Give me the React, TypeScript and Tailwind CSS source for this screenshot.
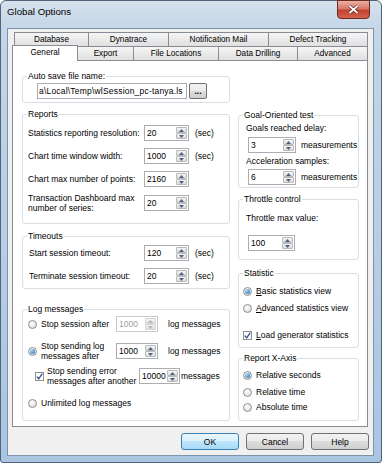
import React from "react";

type SpinProps = { value: string; className: string; disabled?: boolean };

function Arrow({ up, disabled }: { up?: boolean; disabled?: boolean }) {
  return (
    <div
      className={
        "flex-1 flex items-center justify-center border rounded-[1px] bg-[linear-gradient(#f6f6f6,#dcdcdc)] " +
        (disabled ? "border-[#d6d6d6]" : "border-[#b9b9b9]")
      }
    >
      <svg width="5" height="3" viewBox="0 0 5 3">
        <path d={up ? "M0 3 L2.5 0 L5 3 Z" : "M0 0 L2.5 3 L5 0 Z"} fill={disabled ? "#b8b8b8" : "#4d6185"} />
      </svg>
    </div>
  );
}

function Spin({ value, className, disabled }: SpinProps) {
  return (
    <div className={"flex h-[16px] border bg-white shrink-0 " + (disabled ? "border-[#c9c9c9] " : "border-[#abadb3] ") + className}>
      <span className={"flex-1 pl-[2px] flex items-center " + (disabled ? "text-[#a0a0a0]" : "")}>{value}</span>
      <div className="w-[11px] flex flex-col my-[1px] mr-[1px]">
        <Arrow up disabled={disabled} />
        <Arrow disabled={disabled} />
      </div>
    </div>
  );
}

function Radio({ checked }: { checked?: boolean }) {
  return (
    <span className="w-[9px] h-[9px] rounded-full border border-[#8e8f8f] bg-[radial-gradient(circle_at_40%_35%,#ffffff,#d4d4d4)] flex items-center justify-center shrink-0">
      {checked && <span className="w-[5px] h-[5px] rounded-full bg-[radial-gradient(circle_at_35%_30%,#a6dcfc,#1a66ad)]" />}
    </span>
  );
}

function Check({ checked }: { checked?: boolean }) {
  return (
    <span className="w-[9px] h-[9px] border border-[#8e8f8f] bg-white flex items-center justify-center shrink-0">
      {checked && (
        <svg width="7" height="7" viewBox="0 0 7 7">
          <path d="M0.8 3.6 L2.7 5.8 L6.3 0.6" stroke="#3f5597" strokeWidth="1.4" fill="none" />
        </svg>
      )}
    </span>
  );
}

function Group({ title, className, children }: { title: string; className: string; children?: React.ReactNode }) {
  return (
    <fieldset className={"border border-[#d5dfe5] rounded-[3px] " + className}>
      <legend className="ml-[4px] px-[1px] leading-[10px]">{title}</legend>
      {children}
    </fieldset>
  );
}

function Btn({ label, primary }: { label: string; primary?: boolean }) {
  return (
    <button
      className={
        "w-[58px] h-[17px] rounded-[3px] border leading-[10px] " +
        (primary
          ? "border-[#3c7fb1] bg-[linear-gradient(#eaf6fd,#d9f0fc_50%,#bee6fd_50%,#a7d9f5)]"
          : "border-[#707070] bg-[linear-gradient(#f2f2f2,#ebebeb_50%,#dddddd_50%,#cfcfcf)]")
      }
    >
      {label}
    </button>
  );
}

const backTabs = [
  { label: "Database", w: "w-[74px]" },
  { label: "Dynatrace", w: "w-[80px]" },
  { label: "Notification Mail", w: "w-[100px]" },
  { label: "Defect Tracking", w: "w-[100px] border-r" },
];

const frontTabs = [
  { label: "Export", w: "w-[56px]" },
  { label: "File Locations", w: "w-[85px]" },
  { label: "Data Drilling", w: "w-[79px]" },
  { label: "Advanced", w: "w-[70px]" },
];

export default function App() {
  return (
    <div className="w-[382px] h-[463px] overflow-hidden font-['Liberation_Sans',Arial,sans-serif] text-[8.5px] leading-[10px] text-black">
      <div className="w-[382px] h-[463px] border border-[#4f637a] rounded-t-[6px] rounded-b-[3px] bg-[linear-gradient(180deg,#d6e1ec_0px,#c4d6e8_28px,#a9c5e2_100%)] flex flex-col">
        {/* title bar */}
        <div className="h-[27px] flex items-start justify-between">
          <span className="ml-[6px] mt-[5px] text-[9.7px] leading-[12px]">Global Options</span>
          <div className="-mt-px mr-[11px] w-[33px] h-[19px] rounded-b-[4px] border border-[#6b2a22] bg-[linear-gradient(#eab0a3,#d77a6a_45%,#c2412f_55%,#d4634d)] flex items-center justify-center">
            <svg width="11" height="9" viewBox="0 0 11 9">
              <path d="M1.5 1 L9.5 8 M9.5 1 L1.5 8" stroke="#5a2620" strokeWidth="3.2" />
              <path d="M1.5 1 L9.5 8 M9.5 1 L1.5 8" stroke="#ffffff" strokeWidth="1.7" />
            </svg>
          </div>
        </div>

        {/* client area */}
        <div className="ml-[6px] w-[367px] h-[428px] border border-[#7f93aa] bg-[#f0f0f0] flex flex-col">
          <div className="mt-[3px] pl-[6px] h-[14px] flex">
            {backTabs.map((t) => (
              <div
                key={t.label}
                className={"h-[14px] border-l border-t border-[#898c95] bg-[linear-gradient(#f5f5f5,#e0e0e0)] flex items-center justify-center text-[8.2px] " + t.w}
              >
                {t.label}
              </div>
            ))}
          </div>
          <div className="pl-[4px] h-[14px] flex items-end">
            <div className="relative z-10 -mb-px w-[66px] h-[16px] border-l border-t border-r border-[#898c95] bg-white flex items-start justify-center pt-[2px] text-[8.2px]">
              General
            </div>
            {frontTabs.map((t) => (
              <div
                key={t.label}
                className={"h-[14px] border-t border-r border-[#898c95] bg-[linear-gradient(#f5f5f5,#e0e0e0)] flex items-center justify-center text-[8.2px] " + t.w}
              >
                {t.label}
              </div>
            ))}
          </div>

          {/* tab page */}
          <div className="ml-[4px] w-[356px] h-[367px] border border-[#898c95] bg-white flex">
            <div className="ml-[9px] w-[208px] pt-[10px] flex flex-col">
              <Group title="Auto save file name:" className="h-[32px]">
                <div className="mt-[2px] ml-[14px] flex">
                  <div className="w-[150px] h-[16px] border border-[#abadb3] bg-white pl-[1px] flex items-center overflow-hidden whitespace-nowrap tracking-[0.2px]">
                    a\Local\Temp\wlSession_pc-tanya.ls
                  </div>
                  <button className="ml-[2px] w-[18px] h-[16px] rounded-[2px] border border-[#707070] bg-[linear-gradient(#f2f2f2,#ebebeb_50%,#dddddd_50%,#cfcfcf)] font-bold leading-[8px]">
                    ...
                  </button>
                </div>
              </Group>

              <Group title="Reports" className="mt-[6px] h-[115px]">
                <div className="mt-[6px] h-[16px] pl-[5px] flex items-center">
                  <span className="w-[116px]">Statistics reporting resolution:</span>
                  <Spin value="20" className="w-[45px]" />
                  <span className="ml-[6px]">(sec)</span>
                </div>
                <div className="mt-[7px] h-[16px] pl-[5px] flex items-center">
                  <span className="w-[116px]">Chart time window width:</span>
                  <Spin value="1000" className="w-[45px]" />
                  <span className="ml-[6px]">(sec)</span>
                </div>
                <div className="mt-[7px] h-[16px] pl-[5px] flex items-center">
                  <span className="w-[116px]">Chart max number of points:</span>
                  <Spin value="2160" className="w-[45px]" />
                </div>
                <div className="mt-[6px] h-[20px] pl-[5px] flex items-center">
                  <span className="w-[116px]">
                    Transaction Dashboard max
                    <br />
                    number of series:
                  </span>
                  <Spin value="20" className="w-[45px]" />
                </div>
              </Group>

              <Group title="Timeouts" className="mt-[7px] h-[58px]">
                <div className="mt-[4px] h-[16px] pl-[6px] flex items-center">
                  <span className="w-[115px]">Start session timeout:</span>
                  <Spin value="120" className="w-[45px]" />
                  <span className="ml-[6px]">(sec)</span>
                </div>
                <div className="mt-[7px] h-[16px] pl-[6px] flex items-center">
                  <span className="w-[115px]">Terminate session timeout:</span>
                  <Spin value="20" className="w-[45px]" />
                  <span className="ml-[6px]">(sec)</span>
                </div>
              </Group>

              <Group title="Log messages" className="mt-[15px] h-[117px]">
                <div className="mt-[2px] h-[16px] pl-[5px] flex items-center">
                  <Radio />
                  <span className="ml-[4px] w-[75px]">Stop session after</span>
                  <Spin value="1000" className="w-[42px]" disabled />
                  <span className="ml-[10px]">log messages</span>
                </div>
                <div className="mt-[9px] h-[20px] pl-[5px] flex items-center">
                  <Radio checked />
                  <span className="ml-[4px] w-[75px]">
                    Stop sending log
                    <br />
                    messages after
                  </span>
                  <Spin value="1000" className="w-[42px]" />
                  <span className="ml-[10px]">log messages</span>
                </div>
                <div className="mt-[5px] h-[20px] pl-[12px] flex items-center">
                  <Check checked />
                  <span className="ml-[3px] w-[92px]">
                    Stop sending error
                    <br />
                    messages after another
                  </span>
                  <Spin value="10000" className="w-[41px]" />
                  <span className="ml-[1px]">messages</span>
                </div>
                <div className="mt-[11px] h-[12px] pl-[5px] flex items-center">
                  <Radio />
                  <span className="ml-[4px]">Unlimited log messages</span>
                </div>
              </Group>
            </div>

            <div className="ml-[8px] w-[121px] pt-[49px] flex flex-col">
              <Group title="Goal-Oriented test" className="h-[78px]">
                <div className="mt-[3px] pl-[7px]">Goals reached delay:</div>
                <div className="mt-[4px] pl-[9px] flex items-center whitespace-nowrap">
                  <Spin value="3" className="w-[48px]" />
                  <span className="ml-[5px]">measurements</span>
                </div>
                <div className="mt-[3px] pl-[7px]">Acceleration samples:</div>
                <div className="mt-[3px] pl-[9px] flex items-center whitespace-nowrap">
                  <Spin value="6" className="w-[48px]" />
                  <span className="ml-[5px]">measurements</span>
                </div>
              </Group>

              <Group title="Throttle control" className="mt-[6px] h-[66px]">
                <div className="mt-[9px] pl-[7px]">Throttle max value:</div>
                <div className="mt-[12px] pl-[9px] flex">
                  <Spin value="100" className="w-[47px]" />
                </div>
              </Group>

              <Group title="Statistic" className="mt-[8px] h-[80px]">
                <div className="mt-[7px] h-[12px] pl-[4px] flex items-center">
                  <Radio checked />
                  <span className="ml-[4px]">
                    <u>B</u>asic statistics view
                  </span>
                </div>
                <div className="mt-[5px] h-[12px] pl-[4px] flex items-center">
                  <Radio />
                  <span className="ml-[4px]">
                    <u>A</u>dvanced statistics view
                  </span>
                </div>
                <div className="mt-[15px] h-[12px] pl-[4px] flex items-center">
                  <Check checked />
                  <span className="ml-[4px]">
                    <u>L</u>oad generator statistics
                  </span>
                </div>
              </Group>

              <Group title="Report X-Axis" className="mt-[5px] h-[68px]">
                <div className="mt-[6px] h-[12px] pl-[4px] flex items-center">
                  <Radio checked />
                  <span className="ml-[4px]">Relative seconds</span>
                </div>
                <div className="mt-[5px] h-[12px] pl-[4px] flex items-center">
                  <Radio />
                  <span className="ml-[4px]">Relative time</span>
                </div>
                <div className="mt-[3px] h-[12px] pl-[4px] flex items-center">
                  <Radio />
                  <span className="ml-[4px]">Absolute time</span>
                </div>
              </Group>
            </div>
          </div>

          {/* buttons */}
          <div className="mt-[6px] pr-[4px] flex justify-end gap-[7px]">
            <Btn label="OK" primary />
            <Btn label="Cancel" />
            <Btn label="Help" />
          </div>
        </div>
      </div>
    </div>
  );
}
